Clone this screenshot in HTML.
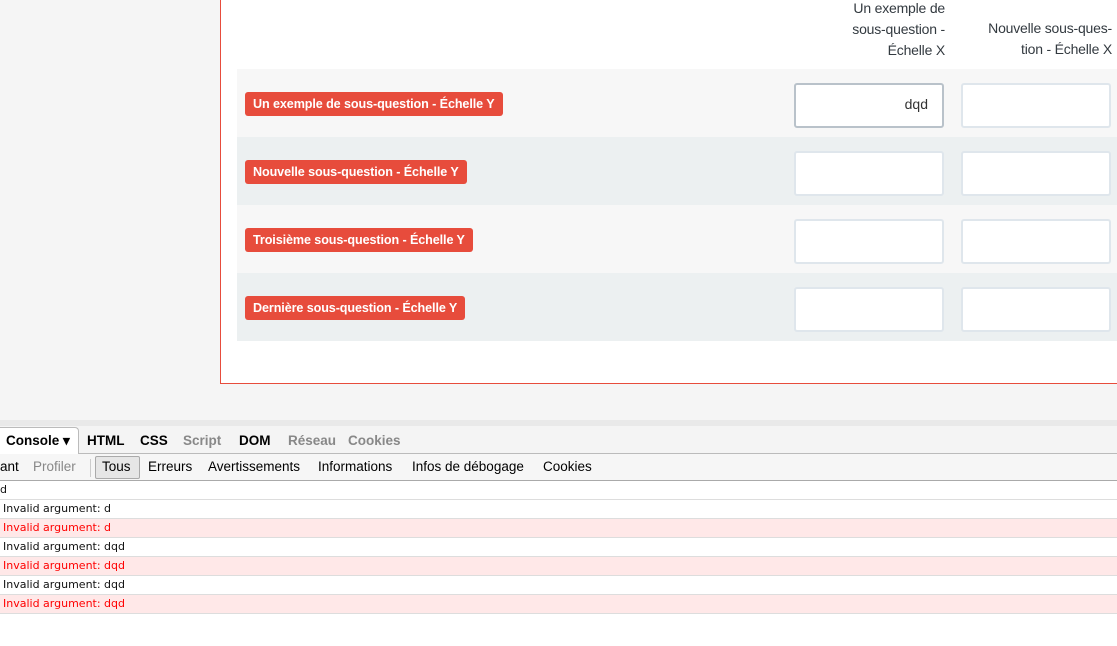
<!DOCTYPE html>
<html><head><meta charset="utf-8"><style>
*{margin:0;padding:0;box-sizing:border-box}
body{width:1117px;height:646px;overflow:hidden;background:#f5f5f5;font-family:"Liberation Sans",sans-serif;position:relative}
.panel{position:absolute;left:220px;top:0;width:897px;height:384px;background:#fff;border-left:1px solid #e74c3c;border-bottom:1px solid #e74c3c}
.hdr{position:absolute;top:-2px;text-align:right;color:#333a40;font-size:14px;line-height:21px;letter-spacing:-0.2px}
.row{position:absolute;left:16px;width:881px;height:68px}
.lbl{position:absolute;left:8px;top:23px;height:24px;background:#e74c3c;color:#fff;font-weight:bold;font-size:12.6px;line-height:24px;padding:0 8px;border-radius:3px;letter-spacing:-0.1px}
.in{position:absolute;top:14px;width:150px;height:45px;background:#fff;border:2px solid #dfe6ec;border-radius:3px}
.dev{position:absolute;left:0;top:420px;width:1117px;height:226px;background:#fff}
.band{height:6px;background:#e9e9e9}
.tabs{height:28px;background:#f4f4f4;border-bottom:1px solid #bbb;position:relative;font-size:13.5px;font-weight:bold}
.tabs span{position:absolute;top:7px}
.tb{height:27px;background:#f6f6f6;border-bottom:1px solid #aaa;position:relative;font-size:13.5px}
.tb span{position:absolute;top:5px}
.log div{height:19px;border-bottom:1px solid #ddd;font-family:"DejaVu Sans",sans-serif;font-size:11px;line-height:18px;padding-left:3px;color:#111}
.log .e{background:#ffe8e8;color:#f00}
</style></head><body>
<div class="panel">
 <div class="hdr" style="left:600px;width:124px">Un exemple de<br>sous-question -<br>Échelle X</div>
 <div class="hdr" style="left:745px;width:146px;top:18px">Nouvelle sous-ques-<br>tion - Échelle X</div>
 <div class="row" style="top:69px;background:#f7f7f7"><div class="lbl">Un exemple de sous-question - Échelle Y</div><div class="in" style="left:557px;border-color:#b9c2ca"><span style="position:absolute;right:14px;top:11px;font-size:14px;color:#333">dqd</span></div><div class="in" style="left:724px"></div></div>
 <div class="row" style="top:137px;background:#ecf0f1"><div class="lbl">Nouvelle sous-question - Échelle Y</div><div class="in" style="left:557px"></div><div class="in" style="left:724px"></div></div>
 <div class="row" style="top:205px;background:#f7f7f7"><div class="lbl">Troisième sous-question - Échelle Y</div><div class="in" style="left:557px"></div><div class="in" style="left:724px"></div></div>
 <div class="row" style="top:273px;background:#ecf0f1"><div class="lbl">Dernière sous-question - Échelle Y</div><div class="in" style="left:557px"></div><div class="in" style="left:724px"></div></div>
</div>
<div class="dev">
 <div class="band"></div>
 <div class="tabs">
  <div style="position:absolute;left:0;top:1px;width:79px;height:28px;background:#fff;border:1px solid #bbb;border-left:none;border-bottom:none;border-radius:0 4px 0 0"></div>
  <span style="left:6px">Console ▾</span><span style="left:87px">HTML</span><span style="left:140px">CSS</span><span style="left:183px;color:#888">Script</span><span style="left:239px">DOM</span><span style="left:288px;color:#888">Réseau</span><span style="left:348px;color:#888">Cookies</span>
 </div>
 <div class="tb">
  <span style="left:0">ant</span><span style="left:33px;color:#888">Profiler</span>
  <div style="position:absolute;left:90px;top:5px;width:1px;height:18px;background:#ccc"></div>
  <div style="position:absolute;left:95px;top:2px;width:45px;height:23px;border:1px solid #aaa;border-radius:2px;background:#e6e6e6"></div>
  <span style="left:102px">Tous</span><span style="left:148px">Erreurs</span><span style="left:208px">Avertissements</span><span style="left:318px">Informations</span><span style="left:412px">Infos de débogage</span><span style="left:543px">Cookies</span>
 </div>
 <div class="log">
  <div style="padding-left:0">d</div>
  <div>Invalid argument: d</div>
  <div class="e">Invalid argument: d</div>
  <div>Invalid argument: dqd</div>
  <div class="e">Invalid argument: dqd</div>
  <div>Invalid argument: dqd</div>
  <div class="e">Invalid argument: dqd</div>
 </div>
</div>
</body></html>
